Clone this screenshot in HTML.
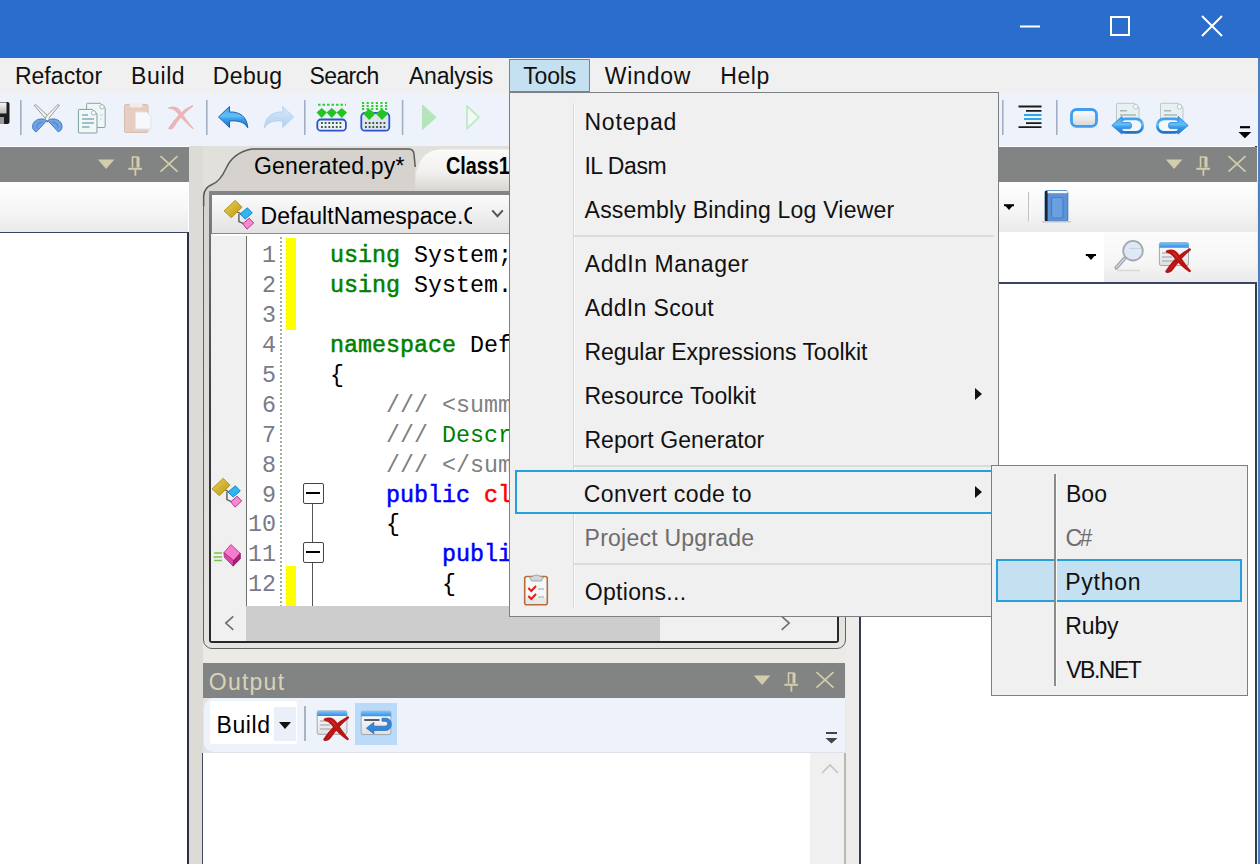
<!DOCTYPE html>
<html lang="en">
<head>
<meta charset="utf-8">
<title>SharpDevelop</title>
<style>
*{box-sizing:border-box;margin:0;padding:0}
html,body{width:1260px;height:864px;overflow:hidden;background:#fff}
body{position:relative;font-family:"Liberation Sans",sans-serif;font-size:23px;color:#000}
.a{position:absolute}
.t{position:absolute;white-space:nowrap;line-height:30px;height:30px}
/* title bar */
#title{left:0;top:0;width:1260px;height:58px;background:#2b6dcd}
/* menubar */
#menubar{left:0;top:58px;width:1260px;height:35px;background:#f0f0f0}
#menubar .t{top:3px;color:#111}
#tools{left:508.500px;top:0.800px;width:81.500px;height:33.700px;background:#c5e0f1;border:1.600px solid #26a0da}
/* toolbar */
#toolbar{left:0;top:93px;width:1260px;height:53px;background:#eef3fb}
.sep{position:absolute;width:2px;background:#a9b3c1;top:8px;height:36px}
/* dock background */
#dock{left:0;top:146px;width:1260px;height:718px;background:#ebeae7}
/* panel header */
.phead{position:absolute;height:34px;background:#828383}
/* code */
.code{font-family:"Liberation Mono",monospace;font-size:23.33px;white-space:pre;position:absolute;left:331px;height:30px;line-height:30px}
.ln{font-family:"Liberation Mono",monospace;font-size:23.33px;position:absolute;width:60px;text-align:right;color:#7a7a8a;height:30px;line-height:30px}
.kw{color:#008000;-webkit-text-stroke:0.5px #008000}
.kb{color:#0000ff;-webkit-text-stroke:0.5px #0000ff}
.kr{color:#ff0000;-webkit-text-stroke:0.5px #ff0000}
.cm{color:#808080}
.cg{color:#008000}
/* menus */
.menu{position:absolute;background:#f0f0f0;border:1px solid #7c7f84}
.menu .t{color:#111}
.msep{position:absolute;height:2px;background:#dcdcdc}
</style>
</head>
<body>
<svg width="0" height="0" style="position:absolute">
<defs>
<linearGradient id="ggold" x1="0" y1="0" x2="1" y2="1"><stop offset="0" stop-color="#ecd358"/><stop offset="1" stop-color="#b8940e"/></linearGradient>
<linearGradient id="gwin" x1="0" y1="0" x2="0" y2="1"><stop offset="0" stop-color="#ffffff"/><stop offset="1" stop-color="#e0e0e0"/></linearGradient>
<linearGradient id="gbar" x1="0" y1="0" x2="0" y2="1"><stop offset="0" stop-color="#7cc4fa"/><stop offset="1" stop-color="#2f8eea"/></linearGradient>
<linearGradient id="gred" x1="0" y1="0" x2="1" y2="1"><stop offset="0" stop-color="#e84040"/><stop offset="1" stop-color="#a81010"/></linearGradient>
<symbol id="icls" viewBox="0 0 32 32">
<path d="M13.500 12.500L18.500 15.200M15.900 15V22.600L20.500 24.600" fill="none" stroke="#5a5a5a" stroke-width="1.400"/>
<path d="M1 11.900L12.200 1.300L19 8.200L8.400 18.800Z" fill="url(#ggold)" stroke="#a8870e" stroke-width="0.800"/>
<path d="M17 15L24.400 8.800L29.300 14L22.200 20Z" fill="#2fb6ee" stroke="#1786c6" stroke-width="1"/>
<path d="M19.800 24.900L26.200 19.200L30.700 24L24 30.100Z" fill="#f58ad2" stroke="#c2309a" stroke-width="1"/>
</symbol>
<symbol id="iwin" viewBox="0 0 32 26">
<rect x="0.500" y="0.500" width="31" height="24.500" rx="2" fill="url(#gwin)" stroke="#9aa2aa" stroke-width="1"/>
<path d="M0.500 6V2.500Q0.500 0.500 2.500 0.500H29.500Q31.500 0.500 31.500 2.500V6Z" fill="url(#gbar)"/>
</symbol>
</defs></svg>
<div id="title" class="a">
<svg class="a" style="left:1010px;top:8px" width="230" height="40" viewBox="0 0 230 40" fill="none" stroke="#fff" stroke-width="2">
<path d="M10 18.500H30"/><rect x="101" y="9" width="18" height="18"/><path d="M192 8L212 28M212 8L192 28"/>
</svg>
</div>
<div id="menubar" class="a">
<div id="tools" class="a"></div>
<div class="t" style="left:14.9px;letter-spacing:0.04px">Refactor</div>
<div class="t" style="left:131.1px;letter-spacing:0.6px">Build</div>
<div class="t" style="left:212.7px;letter-spacing:0.4px">Debug</div>
<div class="t" style="left:309.5px;letter-spacing:-0.62px">Search</div>
<div class="t" style="left:408.9px;letter-spacing:-0.17px">Analysis</div>
<div class="t" style="left:523.2px;letter-spacing:-0.15px">Tools</div>
<div class="t" style="left:604.8px;letter-spacing:0.74px">Window</div>
<div class="t" style="left:720.3px;letter-spacing:0.53px">Help</div>
</div>
<div id="toolbar" class="a">
<svg class="a" style="left:0;top:0" width="1260" height="53" viewBox="0 93 1260 53">
<defs>
<linearGradient id="gblue" x1="0" y1="0" x2="0" y2="1"><stop offset="0" stop-color="#3f9fec"/><stop offset="0.450" stop-color="#62c0f7"/><stop offset="0.600" stop-color="#3a9cea"/><stop offset="1" stop-color="#1f72c6"/></linearGradient>
<linearGradient id="glblue" x1="0" y1="0" x2="0" y2="1"><stop offset="0" stop-color="#d4e7fa"/><stop offset="1" stop-color="#b3d1f0"/></linearGradient>
<linearGradient id="gsilver" x1="0" y1="0" x2="0" y2="1"><stop offset="0" stop-color="#fafafa"/><stop offset="1" stop-color="#b8b8b8"/></linearGradient>
<linearGradient id="gbtn" x1="0" y1="0" x2="0" y2="1"><stop offset="0" stop-color="#ffffff"/><stop offset="1" stop-color="#d8d8d8"/></linearGradient>
</defs>
<!-- separators -->
<g stroke="#a2aec2" stroke-width="1.600">
<path d="M20.8 100V135M206.8 100V135M304.8 100V135M402.6 100V135M1002.8 100V135M1056.8 100V135"/>
</g>
<!-- save (partial) -->
<rect x="-20" y="102" width="29.5" height="22" rx="2" fill="#1c1c1c"/>
<rect x="-20" y="102.5" width="26.5" height="11" fill="url(#gsilver)"/>
<rect x="-4" y="117" width="8" height="7" fill="#9a9a9a"/>
<!-- scissors -->
<path d="M46.800 120.500L36.400 131.800C31.800 130.500 31.200 124.200 35.300 121C39 118.200 44 118.500 46.800 120.500Z" fill="#6fa3e2" stroke="#3f78c4" stroke-width="1"/>
<path d="M47.800 120.500L58.200 131.800C62.800 130.500 63.400 124.200 59.300 121C55.600 118.200 50.600 118.500 47.800 120.500Z" fill="#6fa3e2" stroke="#3f78c4" stroke-width="1"/>
<path d="M37 128.500C35.500 125.500 38.500 122.500 42.500 122M57.600 128.500C59.100 125.500 56.100 122.500 52.100 122" fill="none" stroke="#4f86cf" stroke-width="1.200"/>
<path d="M34.200 105.300L35.900 104.700L49 117L46.600 119.800Z" fill="#f2f2f2" stroke="#909090" stroke-width="0.900"/>
<path d="M59.400 105.300L57.700 104.700L45.600 117L47.600 119.800Z" fill="#f2f2f2" stroke="#909090" stroke-width="0.900"/>
<circle cx="47.300" cy="119" r="1.200" fill="#fff"/>
<path d="M46.300 120.800L47.300 122.500L48.300 120.800Z" fill="#1c4f9c"/>
<!-- copy -->
<path d="M87.400 103.300H100.500L105.200 108V126.500Q105.200 127.500 104.200 127.500H87.400Q86.600 127.500 86.600 126.500V104.300Q86.600 103.300 87.400 103.300Z" fill="#eef6f6" stroke="#86a4aa" stroke-width="1"/>
<circle cx="102" cy="106.800" r="2.200" fill="#fff" stroke="#86a4aa" stroke-width="0.800"/>
<path d="M79.200 109.400H92.300L97 114V132Q97 133 96 133H79.200Q78.400 133 78.400 132V110.400Q78.400 109.400 79.200 109.400Z" fill="#eff7f7" stroke="#7f9ea5" stroke-width="1"/>
<circle cx="93.700" cy="112.900" r="2.200" fill="#fff" stroke="#86a4aa" stroke-width="0.800"/>
<path d="M82.100 115.100H88M82.100 119.100H94M82.100 123H94M82.100 126.900H89.500" stroke="#85b0b6" stroke-width="1.500"/>
<path d="M100 115H103M100 119H102" stroke="#c4d8da" stroke-width="1.200"/>
<!-- paste (disabled) -->
<rect x="124.500" y="104.500" width="23.500" height="28" rx="1.500" fill="#e6cdc2" stroke="#d9bcb0" stroke-width="1"/>
<rect x="129.500" y="103" width="13" height="4.500" rx="2" fill="#f3ebe8"/>
<path d="M135.500 112H146.500L151 116.500V129H135.500Z" fill="#f6f8fb" stroke="#dfe4ea" stroke-width="1"/>
<!-- delete (disabled) -->
<path d="M192.500 106C184 109 174 120 169 128.500C171.500 129.500 173 128 174 126C178 119 186 110 192.500 106Z" fill="#ebb5b8" stroke="#ebb5b8" stroke-width="1.500" stroke-linejoin="round"/>
<path d="M168.500 108C174 106 177 107 180 111C184 117 188 123 193 128.500C187 124 181 117 177 112C175 109.500 172 108.500 168.500 108Z" fill="#ebb5b8" stroke="#ebb5b8" stroke-width="1.200" stroke-linejoin="round"/>
<!-- undo -->
<path d="M218.500 117L229.500 106.500V112C240 111.500 247 117 247.800 127.800C244 121.500 238 120.500 229.500 121V127.500Z" fill="url(#gblue)" stroke="#1f64b0" stroke-width="1" stroke-linejoin="round"/>
<!-- redo (disabled) -->
<path d="M293.700 117L282.700 106.500V112C272.200 111.500 265.200 117 264.400 127.800C268.200 121.500 274.200 120.500 282.700 121V127.500Z" fill="url(#glblue)" stroke="#b8d3ee" stroke-width="1" stroke-linejoin="round"/>
<!-- comment region -->
<path d="M318 104.800H346" stroke="#2fcf2f" stroke-width="2" stroke-dasharray="2.500 2"/>
<g fill="#22c322"><path d="M316.500 112.500L321.700 108L326.900 112.500L321.700 118Z"/><path d="M326.500 112.500L331.700 108L336.900 112.500L331.700 118Z"/><path d="M336.500 112.500L341.800 108L347 112.500L341.800 118Z"/></g>
<rect x="317.300" y="119.500" width="28.600" height="11.200" rx="3.500" fill="#eef0fb" stroke="#2b54cc" stroke-width="1.800"/>
<path d="M321 123H343M321 127H343" stroke="#3a5a3a" stroke-width="1.800" stroke-dasharray="1.800 1.900"/>
<!-- uncomment region -->
<path d="M362 103H389M362 106H389M362 109H389" stroke="#2fcf2f" stroke-width="2" stroke-dasharray="2.200 2.400"/>
<rect x="361.300" y="113" width="28" height="17.700" rx="3.500" fill="#dfe4f0" stroke="#2b54cc" stroke-width="1.800"/>
<g fill="#22c322"><path d="M363 113.500L369.300 109L375.600 113.500L369.300 120Z"/><path d="M375.700 113.500L382 109L388.300 113.500L382 120Z"/></g>
<path d="M365 123H387M365 127H387" stroke="#3a5a3a" stroke-width="1.800" stroke-dasharray="1.800 1.900"/>
<!-- run / run w/o debugger (disabled) -->
<path d="M422.500 105L436 117.300L422.500 129.500Z" fill="#b4e5bd" stroke="#b4e5bd" stroke-width="1" stroke-linejoin="round"/>
<path d="M467 106L479 117.300L467 128.500Z" fill="#f2faf5" stroke="#bfe8c8" stroke-width="1.800" stroke-linejoin="round"/>
<!-- indent -->
<path d="M1018.500 106.500H1041.500M1026 110.800H1041.500M1026 123.200H1041.500M1018.500 127.200H1041.500" stroke="#1a1a1a" stroke-width="1.800"/>
<path d="M1024 115H1041.500M1024 119H1041.500" stroke="#2aa7e8" stroke-width="2"/>
<!-- rounded rect -->
<rect x="1071.500" y="109.500" width="25" height="16.800" rx="5" fill="url(#gbtn)" stroke="#3f9df2" stroke-width="2.800"/>
<!-- doc arrow left -->
<path d="M1117.300 103.300H1134.500L1139 107.800V128H1116.500V104.100Q1116.500 103.300 1117.300 103.300Z" fill="#e9f0f0" stroke="#b4c2c4" stroke-width="0.900"/>
<circle cx="1135.600" cy="106.700" r="2.300" fill="#fbfdfd" stroke="#a9b8ba" stroke-width="0.800"/>
<path d="M1120 110.800H1127M1120 115H1136" stroke="#a5b9bc" stroke-width="1.400"/>
<rect x="1118.500" y="118.800" width="24.200" height="13.600" rx="6.800" fill="#f4f7fb" stroke="url(#gblue)" stroke-width="2.800"/>
<path d="M1111.800 125.500L1122 116.300V122.500H1129.500Q1131.500 122.500 1131.500 125.500Q1131.500 128.600 1129.500 128.600H1122V134.200Z" fill="url(#gblue)" stroke="#2b83de" stroke-width="0.800" stroke-linejoin="round"/>
<!-- doc arrow right -->
<path d="M1161.300 103.300H1178.500L1183 107.800V128H1160.500V104.100Q1160.500 103.300 1161.300 103.300Z" fill="#e9f0f0" stroke="#b4c2c4" stroke-width="0.900"/>
<circle cx="1179.600" cy="106.700" r="2.300" fill="#fbfdfd" stroke="#a9b8ba" stroke-width="0.800"/>
<path d="M1164 110.800H1171M1164 115H1177" stroke="#a5b9bc" stroke-width="1.400"/>
<rect x="1157.300" y="118.800" width="24.200" height="13.600" rx="6.800" fill="#f4f7fb" stroke="url(#gblue)" stroke-width="2.800"/>
<path d="M1188.200 125.500L1178 116.300V122.500H1170.500Q1168.500 122.500 1168.500 125.500Q1168.500 128.600 1170.500 128.600H1178V134.200Z" fill="url(#gblue)" stroke="#2b83de" stroke-width="0.800" stroke-linejoin="round"/>
<!-- overflow -->
<path d="M1240 127.200H1250" stroke="#000" stroke-width="2.200"/><path d="M1238.500 132H1251.300L1244.900 138.200Z" fill="#000"/>
</svg>
</div>
<div id="dock" class="a">
<!-- left panel -->
<div class="a" style="left:0;top:0;width:189px;height:718px;background:#fff"></div><div class="a" style="left:186.600px;top:86px;width:2px;height:632px;background:#2a2f4a"></div>
<div class="a" style="left:0;top:35px;width:188px;height:51px;background:linear-gradient(#fff,#f6f6f6 55%,#eaeaea)"></div>
<div class="a" style="left:0;top:85.800px;width:188px;height:1.600px;background:#3a4366"></div>
<div class="phead" style="left:0;top:1px;width:189px;height:34.500px"><svg class="a" style="left:97px;top:8px" width="86" height="24" viewBox="0 0 86 24"><path d="M0.800 4.600H17.400L9.100 14Z" fill="#d2cdab"/><path d="M35.500 12.500V2H41.500" fill="none" stroke="#d2cdab" stroke-width="1.600"/><path d="M41 2V12.500" stroke="#d2cdab" stroke-width="3"/><path d="M31.300 13.800H45" stroke="#d2cdab" stroke-width="2"/><path d="M38.400 14.500V20.700" stroke="#d2cdab" stroke-width="1.800"/><path d="M63.500 1.200L80.500 16.600M80.500 1.200L63.500 16.600" stroke="#d2cdab" stroke-width="1.700" fill="none"/></svg></div>
<div class="a" style="left:188.500px;top:0;width:14.500px;height:718px;background:#dddbd6"></div>
<!-- center tab strip -->
<div class="a" style="left:203px;top:0;width:642px;height:46px;background:#e2e0db"></div>
<!-- editor frame -->
<div class="a" style="left:203px;top:44px;width:642.500px;height:458.500px;background:linear-gradient(#d6d3ce,#dddad5 30%,#e6e4df);border:1.300px solid #626262;border-radius:7px 9px 9px 9px"></div>
<div class="a" style="left:208.500px;top:44.400px;width:630.500px;height:452.200px;background:linear-gradient(#838587,#6a6c6f 12%,#3c3e43 45%,#26282d);border-radius:3px"></div><div class="a" style="left:211.300px;top:48.500px;width:625.700px;height:446px;background:#fff"></div>
<svg class="a" style="left:200px;top:0" width="650" height="60" viewBox="0 0 650 60">
<defs><linearGradient id="gtab2" x1="0" y1="0" x2="0" y2="1"><stop offset="0" stop-color="#fbfbfa"/><stop offset="0.550" stop-color="#f1f0ee"/><stop offset="1" stop-color="#d9d6d1"/></linearGradient></defs>
<path d="M203 45Q213 39 218 21Q223 4.500 240 3.500H400V45Z" fill="url(#gtab2)"/>
<path d="M3.650 60V50Q4.150 41.500 12 38.500Q20 35.500 26 22.500Q33 6.500 52 3H209Q213.500 3.200 214 8L215.200 21V45H3.500Z" fill="#d6d3ce"/>
<rect x="4.200" y="44.500" width="4.200" height="8.500" fill="#d6d3ce"/>
<path d="M3.650 60V50Q4.150 41.500 12 38.500Q20 35.500 26 22.500Q33 6.500 52 3H209Q213.500 3.200 214 8L215.200 21" fill="none" stroke="#5a5a5a" stroke-width="1.500"/>
</svg>
<div class="t" style="left:254.0px;top:5px;letter-spacing:0.17px">Generated.py*</div>
<div class="t" style="left:446px;top:5px;font-weight:bold;transform:scaleX(0.86);transform-origin:0 50%">Class1</div>
<!-- class combo -->
<div class="a" style="left:211.300px;top:48.500px;width:625.700px;height:39.500px;background:linear-gradient(#fbfbfb,#efefef 50%,#e2e2e2);border-bottom:1px solid #8e8e8e;border-left:1.500px solid #7c7e80"></div>
<div class="a" style="left:260.5px;top:55px;width:211.7px;height:30px;overflow:hidden"><div class="t" style="left:0;top:0;letter-spacing:0.05px">DefaultNamespace.Class1</div></div>
<svg class="a" style="left:491px;top:62.500px" width="13" height="10" viewBox="0 0 13 10"><path d="M1.200 1.300L6.500 7.200L11.800 1.300" fill="none" stroke="#555" stroke-width="2"/></svg>
<!-- code area -->
<div class="a" style="left:211.300px;top:88px;width:2px;height:372px;background:#f0f0f0"></div>
<div id="code" class="a" style="left:212px;top:90px;width:625px;height:370px;background:#fff;overflow:hidden">
<div class="a" style="left:0;top:0;width:35px;height:370px;background:#f0f0f0;border-right:1px solid #6f6f6f"></div>
<div class="a" style="left:68px;top:1px;width:2px;height:369px;background:repeating-linear-gradient(#a3b09e 0 2px,#fff 2px 4px)"></div>
<div class="a" style="left:74px;top:2px;width:10px;height:92px;background:#ffff00"></div>
<div class="a" style="left:74px;top:330px;width:10px;height:40px;background:#ffff00"></div>
<div class="a" style="left:100px;top:267px;width:1px;height:103px;background:#555"></div>
<div class="a" style="left:90.5px;top:246.5px;width:21px;height:21px;background:#fff;border:1px solid #444;border-radius:2px"></div>
<div class="a" style="left:94px;top:256.0px;width:14px;height:2px;background:#000"></div>
<div class="a" style="left:90.5px;top:305.5px;width:21px;height:21px;background:#fff;border:1px solid #444;border-radius:2px"></div>
<div class="a" style="left:94px;top:315.0px;width:14px;height:2px;background:#000"></div>
<div class="ln" style="left:4px;top:5.3px">1</div>
<div class="code" style="left:118px;top:5.3px"><span class="kw">using</span> System;</div>
<div class="ln" style="left:4px;top:35.2px">2</div>
<div class="code" style="left:118px;top:35.2px"><span class="kw">using</span> System.</div>
<div class="ln" style="left:4px;top:65.1px">3</div>
<div class="ln" style="left:4px;top:95.0px">4</div>
<div class="code" style="left:118px;top:95.0px"><span class="kw">namespace</span> Def</div>
<div class="ln" style="left:4px;top:124.9px">5</div>
<div class="code" style="left:118px;top:124.9px">{</div>
<div class="ln" style="left:4px;top:154.8px">6</div>
<div class="code" style="left:118px;top:154.8px">    <span class="cm">/// &lt;summ</span></div>
<div class="ln" style="left:4px;top:184.7px">7</div>
<div class="code" style="left:118px;top:184.7px">    <span class="cm">/// </span><span class="cg">Descr</span></div>
<div class="ln" style="left:4px;top:214.6px">8</div>
<div class="code" style="left:118px;top:214.6px">    <span class="cm">/// &lt;/sum</span></div>
<div class="ln" style="left:4px;top:244.5px">9</div>
<div class="code" style="left:118px;top:244.5px">    <span class="kb">public</span> <span class="kr">cl</span></div>
<div class="ln" style="left:4px;top:274.4px">10</div>
<div class="code" style="left:118px;top:274.4px">    {</div>
<div class="ln" style="left:4px;top:304.3px">11</div>
<div class="code" style="left:118px;top:304.3px">        <span class="kb">publi</span></div>
<div class="ln" style="left:4px;top:334.2px">12</div>
<div class="code" style="left:118px;top:334.2px">        {</div>
</div>
<!-- hscroll -->
<div class="a" style="left:211.300px;top:460px;width:625.700px;height:34.500px;background:#f0f0f0"></div>
<div class="a" style="left:246px;top:460px;width:414px;height:34.500px;background:#cdcdcd"></div>
<svg class="a" style="left:222px;top:467px" width="16" height="20" viewBox="0 0 16 20"><path d="M11.300 3.300L3.800 10.100L11.300 16.900" fill="none" stroke="#6e6e6e" stroke-width="1.600"/></svg>
<svg class="a" style="left:777px;top:467px" width="16" height="20" viewBox="0 0 16 20"><path d="M4.700 3.300L12.200 10.100L4.700 16.900" fill="none" stroke="#6e6e6e" stroke-width="1.600"/></svg>
<!-- output panel -->
<div class="a" style="left:203px;top:552px;width:642px;height:55px;background:#e6e3df"></div><div class="a" style="left:202px;top:606.500px;width:644px;height:112px;background:#fff;border-left:1.500px solid #454a5e;border-right:2px solid #b9b7b2"></div>
<div class="phead" style="left:203px;top:516.500px;width:642px;height:35.500px"><div class="t" style="left:5.8px;top:4px;color:#d8d3b8;letter-spacing:1.24px">Output</div><svg class="a" style="left:550px;top:8.5px" width="86" height="24" viewBox="0 0 86 24"><path d="M0.800 4.600H17.400L9.100 14Z" fill="#d2cdab"/><path d="M35.500 12.500V2H41.500" fill="none" stroke="#d2cdab" stroke-width="1.600"/><path d="M41 2V12.500" stroke="#d2cdab" stroke-width="3"/><path d="M31.300 13.800H45" stroke="#d2cdab" stroke-width="2"/><path d="M38.400 14.500V20.700" stroke="#d2cdab" stroke-width="1.800"/><path d="M63.500 1.200L80.500 16.600M80.500 1.200L63.500 16.600" stroke="#d2cdab" stroke-width="1.700" fill="none"/></svg></div>
<div class="a" style="left:204px;top:552px;width:641px;height:54.500px;background:#eef3fb;border-radius:10px 0 0 10px;border-bottom:1.500px solid #dfe2e8"></div>
<div class="a" style="left:210px;top:555px;width:87px;height:43px;background:#fff;border-radius:3px"></div>
<div class="a" style="left:274px;top:561px;width:22px;height:34px;background:#eaf0fa"></div>
<div class="t" style="left:216.5px;top:564px;letter-spacing:0.6px">Build</div>
<div class="a" style="left:279px;top:576px;width:0;height:0;border-top:7px solid #111;border-left:6px solid transparent;border-right:6px solid transparent"></div>
<div class="a" style="left:304px;top:560px;width:2px;height:35px;background:#a9b3c1"></div>
<div class="a" style="left:355px;top:557px;width:41.500px;height:41.500px;background:#badafa"></div>
<div class="a" style="left:810px;top:606.500px;width:34px;height:112px;background:#f0f0f0"></div>
<svg class="a" style="left:819.500px;top:617px" width="20" height="12" viewBox="0 0 20 12"><path d="M2 10L10 2L18 10" fill="none" stroke="#c4c4c4" stroke-width="1.6"/></svg>
<svg class="a" style="left:823.700px;top:583.500px" width="16" height="16" viewBox="0 0 16 16"><path d="M2 3H13" stroke="#444" stroke-width="2"/><path d="M1.5 8H13.5L7.5 13.5Z" fill="#444"/></svg>
<!-- right splitter and panel -->
<div class="a" style="left:846px;top:0;width:14px;height:718px;background:#edecea"></div>
<div class="a" style="left:859.200px;top:0;width:398.300px;height:718px;background:#fff;border-left:2px solid #363a50;border-right:2px solid #363a50"></div>
<div class="a" style="left:860px;top:35px;width:397px;height:51px;background:linear-gradient(#fff,#f6f6f6 55%,#eaeaea)"></div>
<div class="a" style="left:860px;top:86px;width:397px;height:50px;background:linear-gradient(#fcfcfc,#f6f6f6 60%,#eaeaea)"></div>
<div class="a" style="left:860px;top:86px;width:244px;height:50px;background:#fff"></div>
<div class="a" style="left:860px;top:136px;width:397px;height:1.600px;background:#3a4366"></div>
<div class="phead" style="left:860px;top:1px;width:397px;height:34.500px"><svg class="a" style="left:305.2px;top:8px" width="86" height="24" viewBox="0 0 86 24"><path d="M0.800 4.600H17.400L9.100 14Z" fill="#d2cdab"/><path d="M35.500 12.500V2H41.500" fill="none" stroke="#d2cdab" stroke-width="1.600"/><path d="M41 2V12.500" stroke="#d2cdab" stroke-width="3"/><path d="M31.300 13.800H45" stroke="#d2cdab" stroke-width="2"/><path d="M38.400 14.500V20.700" stroke="#d2cdab" stroke-width="1.800"/><path d="M63.500 1.200L80.500 16.600M80.500 1.200L63.500 16.600" stroke="#d2cdab" stroke-width="1.700" fill="none"/></svg></div>

<svg class="a" style="left:223.200px;top:52.900px" width="32" height="32"><use href="#icls"/></svg>
<svg class="a" style="left:211px;top:331px" width="32" height="32"><use href="#icls"/></svg>
<svg class="a" style="left:211px;top:397px" width="32" height="26" viewBox="211 543 32 26">
<path d="M214.100 553.100H222M213.500 557H222M214.100 560.600H222" stroke="#78c448" stroke-width="1.500"/>
<path d="M230.900 544.500L240.300 553.300L233.600 560.600L223.900 552.700Z" fill="#f47ccc" stroke="#c02890" stroke-width="0.800"/>
<path d="M223.900 552.700L233.600 560.600L233.200 566.100L224.500 557.600Z" fill="#d848a8" stroke="#b02080" stroke-width="0.800"/>
<path d="M240.300 553.300L233.600 560.600L233.200 566.100L240.300 558.800Z" fill="#a82078" stroke="#901868" stroke-width="0.800"/>
</svg>
<!-- output toolbar icons -->
<svg class="a" style="left:316px;top:564px" width="34" height="32" viewBox="316 710 34 32">
<use href="#iwin" x="316.200" y="710.300" width="31.700" height="25"/>
<path d="M320 721H332M320 725H330M320 729H332" stroke="#b4b8bc" stroke-width="1.400"/>
<path d="M347.900 717.500C339 722 330 731 324.500 739.500C327.500 740.300 329.500 738.500 331 736C335 729.500 341 723 347.900 717.500Z" fill="url(#gred)" stroke="#b81414" stroke-width="2.400" stroke-linejoin="round"/>
<path d="M324.900 719.500C330 717.500 333 719 335.500 722.500C339 727.500 343 734 347.600 739C342 735.500 336 729 332 724C330 721.500 328 720 324.900 719.500Z" fill="url(#gred)" stroke="#b81414" stroke-width="2.400" stroke-linejoin="round"/>
</svg>
<svg class="a" style="left:360px;top:564px" width="34" height="28" viewBox="360 710 34 28">
<use href="#iwin" x="360.300" y="710.600" width="31.500" height="25"/>
<path d="M364.200 720H379.500" stroke="#4a4a4a" stroke-width="1.800"/>
<path d="M366.400 728.200L373.800 722.300V726.200H385C388.500 726.200 388.500 721.200 385 721.200H382V718.200H386C393 718.200 393 730.400 386 730.400H373.800V733.800Z" fill="#3585d8" stroke="#2a70c0" stroke-width="0.800" stroke-linejoin="round"/>
</svg>
<!-- right panel toolbars -->
<svg class="a" style="left:999px;top:35px" width="258" height="102" viewBox="999 181 258 102">
<path d="M1004 205.200H1014" stroke="#000" stroke-width="2"/><path d="M1005.500 206H1012.500L1009 210Z" fill="#000"/>
<path d="M1085.800 255H1096" stroke="#000" stroke-width="2"/><path d="M1087.500 256H1094.500L1091 260Z" fill="#000"/>
<path d="M1028.700 192V221.600" stroke="#c4c4c4" stroke-width="1.400"/><path d="M1030 192V221.600" stroke="#fff" stroke-width="1.200"/>
<!-- book -->
<rect x="1045" y="190.800" width="22.800" height="30.500" rx="1.500" fill="#5c92d6" stroke="#3f74ba" stroke-width="1"/>
<rect x="1045" y="191" width="2.600" height="30" fill="#1e2430"/>
<rect x="1047.600" y="191" width="20" height="2.200" fill="#f4f8fc"/>
<rect x="1051.500" y="197.500" width="11.500" height="20.500" rx="1.500" fill="#6aa0e0" stroke="#4a7ec4" stroke-width="1.200"/>
<path d="M1042 221.800H1071" stroke="#c9c9c9" stroke-width="1.500"/>
<!-- magnifier -->
<path d="M1124.500 258.500L1116.300 267.800" stroke="#9a9ea6" stroke-width="3.600" stroke-linecap="round"/>
<path d="M1124.500 258.500L1116.300 267.800" stroke="#d4d8de" stroke-width="1.400" stroke-linecap="round"/>
<circle cx="1133" cy="250.700" r="9.800" fill="#dfe9f6" stroke="#a4a8ae" stroke-width="1.800"/>
<path d="M1129 248.500H1141" stroke="#c8d4e4" stroke-width="1.200"/>
<path d="M1117 270.500H1140" stroke="#d8d8d8" stroke-width="1.500"/>
<!-- clear window -->
<use href="#iwin" x="1158.300" y="242" width="31.400" height="24.500"/>
<path d="M1162 253H1174M1162 257H1172M1162 261H1174" stroke="#b4b8bc" stroke-width="1.400"/>
<path d="M1189.700 249.500C1181 254 1172 263 1166.500 271.500C1169.500 272.300 1171.500 270.500 1173 268C1177 261.500 1183 255 1189.700 249.500Z" fill="url(#gred)" stroke="#b81414" stroke-width="2.400" stroke-linejoin="round"/>
<path d="M1167 251.500C1172 249.500 1175 251 1177.500 254.500C1181 259.500 1185 266 1189.700 271C1184 267.500 1178 261 1174 256C1172 253.500 1170 252 1167 251.500Z" fill="url(#gred)" stroke="#b81414" stroke-width="2.400" stroke-linejoin="round"/>
</svg>
</div>
<div class="a" style="left:1258px;top:58px;width:2px;height:806px;background:#4f7fc0"></div>
<div id="menu" class="menu" style="left:509px;top:92.400px;width:490px;height:525px">
<div class="a" style="left:0;top:0.600px;width:488px;height:520px">
<div class="a" style="left:63px;top:9px;width:1px;height:505px;background:#d7d7d7"></div>
<div class="a" style="left:64px;top:9px;width:1px;height:505px;background:#fdfdfd"></div>
<div class="msep" style="left:64px;top:141px;width:420px"></div>
<div class="msep" style="left:64px;top:371px;width:420px"></div>
<div class="msep" style="left:64px;top:469px;width:420px"></div>
<div class="a" style="left:5px;top:376px;width:480px;height:44px;border:2px solid #26a0da;background:#f0f0f0"></div>
<div class="t" style="left:74.4px;top:13px;letter-spacing:0.83px">Notepad</div>
<div class="t" style="left:74.4px;top:57px;letter-spacing:-0.42px">IL Dasm</div>
<div class="t" style="left:74.6px;top:101px;letter-spacing:0.22px">Assembly Binding Log Viewer</div>
<div class="t" style="left:74.8px;top:155px;letter-spacing:0.53px">AddIn Manager</div>
<div class="t" style="left:74.8px;top:199px;letter-spacing:0.36px">AddIn Scout</div>
<div class="t" style="left:74.4px;top:243px;letter-spacing:-0.01px">Regular Expressions Toolkit</div>
<div class="t" style="left:74.4px;top:287px;letter-spacing:0.12px">Resource Toolkit</div>
<div class="t" style="left:74.4px;top:331px;letter-spacing:0.06px">Report Generator</div>
<div class="t" style="left:73.8px;top:385px;letter-spacing:0.39px">Convert code to</div>
<div class="t" style="left:74.6px;top:429px;color:#6d6d6d;letter-spacing:0.24px">Project Upgrade</div>
<div class="t" style="left:74.8px;top:483px;letter-spacing:0.32px">Options...</div>
<div class="a" style="left:465px;top:294px;width:0;height:0;border-left:7px solid #111;border-top:6px solid transparent;border-bottom:6px solid transparent"></div>
<div class="a" style="left:465px;top:392px;width:0;height:0;border-left:7px solid #111;border-top:6px solid transparent;border-bottom:6px solid transparent"></div>
<svg class="a" style="left:12px;top:479px" width="28" height="34" viewBox="522 573 28 34">
<rect x="524.700" y="576.500" width="22.600" height="28.300" rx="2" fill="#f3f8f8" stroke="#b96a3a" stroke-width="1.600"/>
<path d="M526 598H546V604H526Z" fill="#e2eaea"/>
<path d="M529.500 577L531.500 581H541.500L543.500 577C540 577 539 575 536.500 575C534 575 533 577 529.500 577Z" fill="#d2d6da" stroke="#9098a0" stroke-width="0.800"/>
<path d="M528.300 588L531.300 591L536 586M528.300 596L531.300 599L536 594" fill="none" stroke="#f01818" stroke-width="2"/>
<path d="M538 589H544M538 597H544" stroke="#b8c0c4" stroke-width="1.500"/>
</svg>
</div>
</div>
<div id="submenu" class="menu" style="left:990.500px;top:465px;width:257.500px;height:230.500px">
<div class="a" style="left:4px;top:92.5px;width:246px;height:43px;border:2px solid #26a0da;background:#c5e0f1"></div>
<div class="a" style="left:62.5px;top:8px;width:1.5px;height:212px;background:#8c8c8c"></div><div class="a" style="left:64px;top:8px;width:1px;height:212px;background:#fafafa"></div>
<div class="t" style="left:74.5px;top:13px;letter-spacing:0.0px">Boo</div>
<div class="t" style="left:74.0px;top:57px;color:#6d6d6d;letter-spacing:-2.5px">C#</div>
<div class="t" style="left:73.7px;top:101px;letter-spacing:0.76px">Python</div>
<div class="t" style="left:73.7px;top:145px;letter-spacing:-0.1px">Ruby</div>
<div class="t" style="left:74.7px;top:189px;letter-spacing:-1.48px">VB.NET</div>
</div>
</body>
</html>
